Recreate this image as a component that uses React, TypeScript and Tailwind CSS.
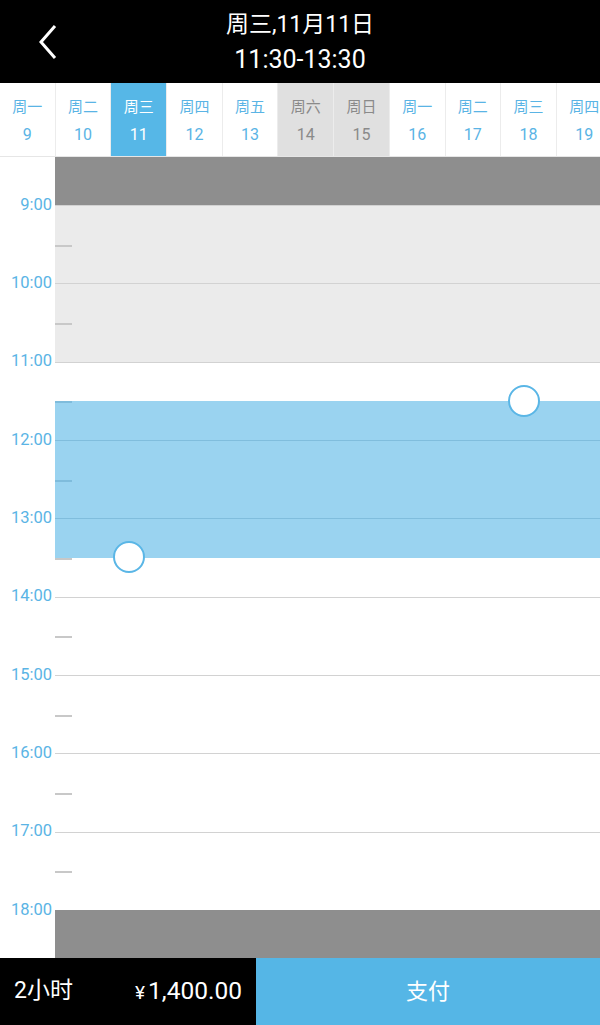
import React from "react";

const days = [
  { w: "周一", d: 9 },
  { w: "周二", d: 10 },
  { w: "周三", d: 11, active: true },
  { w: "周四", d: 12 },
  { w: "周五", d: 13 },
  { w: "周六", d: 14, off: true },
  { w: "周日", d: 15, off: true },
  { w: "周一", d: 16 },
  { w: "周二", d: 17 },
  { w: "周三", d: 18 },
  { w: "周四", d: 19 },
];

const hours = [9, 10, 11, 12, 13, 14, 15, 16, 17];

// half-hour slot colours: 9-11 closed (grey), 11:30-13:30 picked (blue)
function halfBg(h: number, half: number) {
  const t = h + half * 0.5;
  if (t < 11) return "bg-[#ebebeb]";
  if (t >= 11.5 && t < 13.5) return "bg-[#9ad3f0]";
  return "bg-white";
}

function Handle() {
  return <div className="w-[32px] h-[32px] rounded-full bg-white border-2 border-[#5ab6e6]" />;
}

export default function App() {
  return (
    <div className="w-[600px] h-[1025px] flex flex-col bg-white overflow-hidden" style={{ fontFamily: "Roboto, 'Noto Sans CJK SC', sans-serif" }}>
      {/* header */}
      <div className="h-[83px] bg-black flex items-center relative shrink-0">
        <div className="absolute left-[38px] top-[24px]">
          <svg width="22" height="36" viewBox="0 0 22 36">
            <polyline points="17,2 3,18 17,34" fill="none" stroke="white" strokeWidth="3" />
          </svg>
        </div>
        <div className="flex-1 flex flex-col items-center text-white">
          <div className="text-[23px] leading-[30px] mt-[2px]">周三,11月11日</div>
          <div className="text-[25px] leading-[32px] mt-[4px]">11:30-13:30</div>
        </div>
      </div>

      {/* date strip */}
      <div className="h-[74px] flex shrink-0 border-b border-[#e6e6e6]">
        {days.map((x, i) => (
          <div
            key={i}
            className={
              "w-[55.7px] shrink-0 flex flex-col items-center pt-[14px] border-r border-[#ececec] " +
              (x.active ? "bg-[#56b7e7] text-white" : x.off ? "bg-[#e0e0e0] text-[#8a8a8a]" : "bg-white text-[#5ab4e5]")
            }
          >
            <div className="text-[15px] leading-[20px]">{x.w}</div>
            <div className="text-[16px] leading-[20px] mt-[8px]">{x.d}</div>
          </div>
        ))}
      </div>

      {/* timeline */}
      <div className="flex flex-1 min-h-0">
        <div className="w-[55px] shrink-0 flex flex-col pt-[8.83px]">
          {[...hours, 18].map((h) => (
            <div key={h} className="h-[78.33px] shrink-0 flex items-center justify-end pr-[3px] text-[16.5px] text-[#5ab4e5]">
              {h}:00
            </div>
          ))}
        </div>
        <div className="flex-1 flex flex-col relative">
          <div className="h-[48px] shrink-0 bg-[#8e8e8e]" />
          {hours.map((h) => (
            <div
              key={h}
              className={"h-[78.33px] shrink-0 flex flex-col border-t " + (h === 12 || h === 13 ? "border-[#80bddd]" : "border-[#d2d2d2]")}
            >
              <div className={"h-[38.67px] " + halfBg(h, 0)} />
              <div className={"h-[38.67px] relative " + halfBg(h, 1)}>
                <div className={"absolute left-0 top-0 w-[17px] h-[2px] " + (h >= 11 && h < 13 ? "bg-[#7fbcdc]" : "bg-[#c8c8c8]")} />
              </div>
            </div>
          ))}
          <div className="h-[48px] shrink-0 bg-[#8e8e8e]" />
          <div className="absolute left-[453px] top-[228px]">
            <Handle />
          </div>
          <div className="absolute left-[58px] top-[384px]">
            <Handle />
          </div>
        </div>
      </div>

      {/* bottom bar */}
      <div className="h-[67px] flex shrink-0">
        <div className="w-[256px] bg-black text-white flex items-center justify-between pl-[14px] pr-[14px]">
          <span className="text-[23px]">2小时</span>
          <span className="text-[24.5px]">
            <span className="text-[19px] mr-[3px]">¥</span>1,400.00
          </span>
        </div>
        <div className="flex-1 bg-[#55b6e6] text-white flex items-center justify-center text-[22px]">支付</div>
      </div>
    </div>
  );
}
